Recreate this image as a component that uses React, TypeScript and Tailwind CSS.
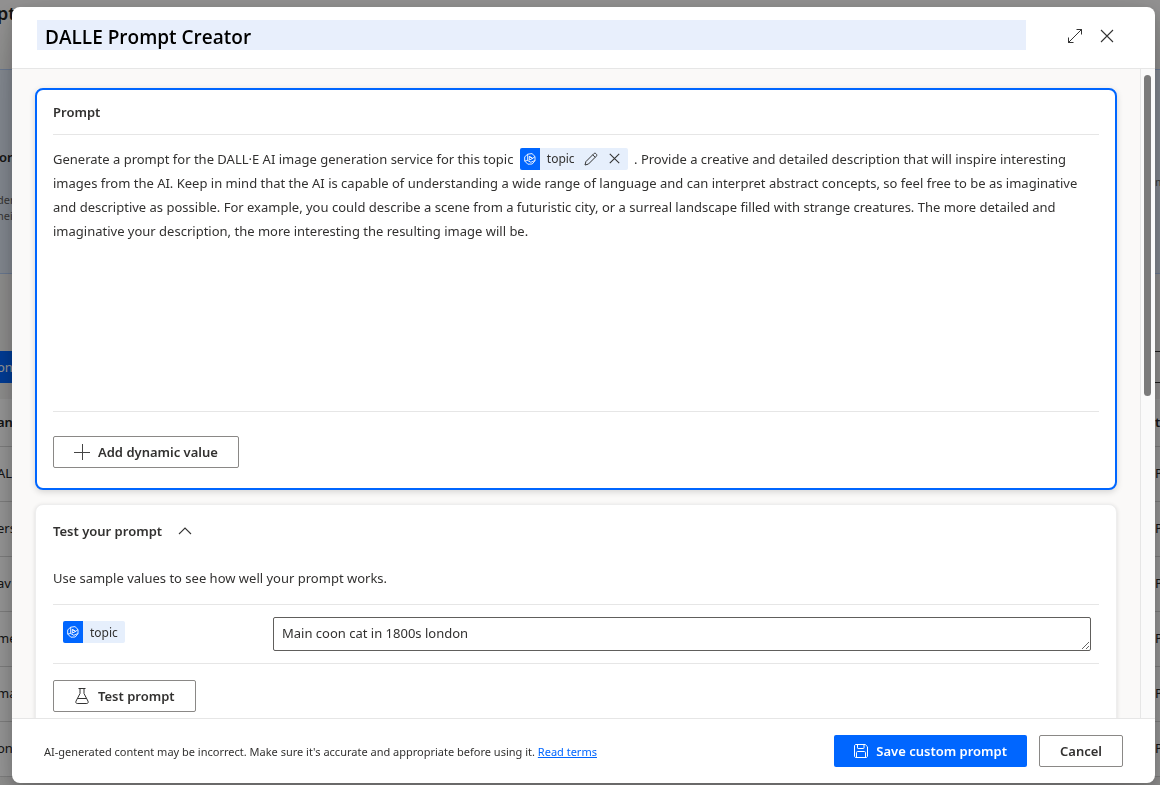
import React from 'react';

const rows = ['AL', 'ers', 'av', 'me', 'ma', 'on'];

function ExpandIcon() {
  return (
    <svg width="16" height="16" viewBox="0 0 16 16" fill="none" stroke="#333" aria-hidden="true">
      <path d="M1.2 14.8L14.8 1.2M9.5 1.5h5v5M1.5 9.5v5h5" />
    </svg>
  );
}

function CrossIcon({ size }: { size: number }) {
  return (
    <svg width={size} height={size} viewBox="0 0 14 14" fill="none" stroke="#333" strokeWidth={size > 12 ? 1.1 : 1.4} aria-hidden="true">
      <path d="M1 1l12 12M13 1L1 13" />
    </svg>
  );
}

function PencilIcon() {
  return (
    <svg width="14" height="14" viewBox="0 0 14 14" fill="none" stroke="#333" strokeLinejoin="round" aria-hidden="true">
      <path d="M1 13l.9-3.400L9.800 1.700c.6-.6 1.600-.6 2.200 0l.3.3c.6.6.6 1.600 0 2.200L4.400 12.100 1 13zM8.700 2.800l2.500 2.500" />
    </svg>
  );
}

function PlusIcon() {
  return (
    <svg width="16" height="16" viewBox="0 0 16 16" fill="none" stroke="#444" aria-hidden="true">
      <path d="M0 8.5h16M8.5 0v16" />
    </svg>
  );
}

function FlaskIcon() {
  return (
    <svg width="16" height="16" viewBox="0 0 16 16" fill="none" stroke="#333" strokeLinejoin="round" aria-hidden="true">
      <path d="M4.5.5h7M6 .5v5L2 13.200c-.5 1.100 0 2.300 1.200 2.300h9.600c1.200 0 1.700-1.200 1.200-2.300L10 5.500v-5M3.500 10.500h9" />
    </svg>
  );
}

function SaveIcon() {
  return (
    <svg width="14" height="14" viewBox="0 0 14 14" fill="none" stroke="#fff" aria-hidden="true">
      <path d="M2 .5h9.200l2.300 2.300V12c0 .9-.6 1.500-1.500 1.500H2C1.100 13.500.5 12.900.5 12V2C.5 1.100 1.100.5 2 .5zM3.500.5v3.400c0 .4.200.6.600.6h5.300c.4 0 .6-.2.6-.6V.5M2.500 13.500V8.600c0-.7.4-1.100 1.100-1.100h6.800c.7 0 1.100.4 1.100 1.100v4.900" />
    </svg>
  );
}

function ChevronIcon() {
  return (
    <svg width="14" height="8" viewBox="0 0 14 8" fill="none" stroke="#333" strokeWidth="1.1" aria-hidden="true">
      <path d="M1 7l6-6 6 6" />
    </svg>
  );
}

function ValueMark() {
  return (
    <span className="flex h-[22px] w-5 items-center justify-center rounded-l-[2px] bg-[#0066ff]">
      <svg width="12" height="12" viewBox="0 0 12 12" fill="none" stroke="#fff" strokeWidth="0.9" strokeLinejoin="round" aria-hidden="true">
        <path d="M3.500 1.200L8 .6l3 2.900v4.200L8.200 11l-4.400.2L.7 8V4zM3.700 1.200v6.300l3.200 1.800 4-1.800M5.300 3.500v3.600l3.400-1.700zM8.700 5.400L5.300 3.500M.7 8l3-.5M8.700 5.400L11 3.500" />
      </svg>
    </span>
  );
}

function Backdrop() {
  return (
    <div className="-ml-[3px] h-screen overflow-hidden bg-[#f3f2f1] text-[13px] text-[#242424]" aria-hidden="true">
      <div className="h-[69px] text-lg font-semibold leading-[26px]">pt</div>
      <div className="flex h-[205px] justify-between border-y border-[#b4cdf5] bg-[#dfe8f5] pt-[76px]">
        <div>
          <div className="pl-0.5 font-semibold leading-[22px]">or</div>
          <div className="pt-6 text-[11px] leading-4 text-[#605e5c]">der<br />hei</div>
        </div>
        <div className="w-[5px] pt-7 text-[11px] text-[#605e5c]">m</div>
      </div>
      <div className="flex h-[125px] items-end justify-between pb-4">
        <div className="h-8 w-20 bg-[#0066ff] leading-8 text-white">on</div>
        <div className="h-8 w-5 border-y border-[#333]" />
      </div>
      <div className="flex h-12 items-center justify-between border-b border-[#d6d6d6] bg-white font-semibold">
        <span>an</span>
        <span className="w-[5px]">t</span>
      </div>
      {rows.map((name) => (
        <div key={name} className="flex h-[55px] items-center justify-between border-b border-[#d6d6d6] bg-white">
          <span>{name}</span>
          <span className="w-[5px]">P</span>
        </div>
      ))}
    </div>
  );
}

export default function App() {
  return (
    <div className="h-screen overflow-hidden font-['Noto_Sans','Open_Sans',sans-serif] text-[#323130]">
      <Backdrop />
      <div className="fixed inset-0 flex bg-black/40 pt-[7px] pr-[5px] pb-[2px] pl-3">
        <div
          role="dialog"
          aria-label="DALLE Prompt Creator"
          className="flex min-w-0 flex-1 flex-col overflow-hidden rounded-lg bg-white shadow-[0_25px_58px_rgba(0,0,0,0.22),0_5px_14px_rgba(0,0,0,0.18)]"
        >
          <header className="flex h-[62px] shrink-0 items-start border-b border-[#e6e6e6] pt-[13px] pr-[41px] pl-[25px]">
            <input
              aria-label="Prompt name"
              defaultValue="DALLE Prompt Creator"
              className="h-[30px] min-w-0 flex-1 bg-[#e8effc] px-2 pt-1 font-['Open_Sans','Noto_Sans',sans-serif] text-[19px] font-semibold text-black outline-none"
            />
            <div className="ml-[41px] flex h-8 items-center gap-[17px]">
              <button aria-label="Expand"><ExpandIcon /></button>
              <button aria-label="Close"><CrossIcon size={14} /></button>
            </div>
          </header>

          <div className="flex min-h-0 flex-1">
            <main className="min-w-0 flex-1 overflow-hidden bg-[#faf9f8] pt-[19px] pr-[23px] pl-[23px]">
              <section className="rounded-lg border-2 border-[#0066ff] bg-white px-4 pb-5 shadow-[0_2px_6px_rgba(0,0,0,0.15)]">
                <h2 className="h-[45px] border-b border-[#e6e6e6] text-[13px] leading-[45px] font-semibold">Prompt</h2>
                <div className="h-[277px] border-b border-[#e6e6e6] pt-3 text-[13px] leading-6">
                  Generate a prompt for the DALL·E AI image generation service for this topic{' '}
                  <span className="-mt-[5px] mr-[3px] -mb-px ml-[3px] inline-flex h-[22px] items-center gap-[7px] rounded-[2px] bg-[#e6effc] pr-2 align-middle text-xs">
                    <ValueMark />
                    topic
                    <button aria-label="Edit topic" className="ml-0.5"><PencilIcon /></button>
                    <button aria-label="Remove topic" className="ml-1"><CrossIcon size={11} /></button>
                  </span>{' '}
                  . Provide a creative and detailed description that will inspire interesting images from the AI. Keep in mind that the AI is capable of understanding a wide range of language and can interpret abstract concepts, so feel free to be as imaginative and descriptive as possible. For example, you could describe a scene from a futuristic city, or a surreal landscape filled with strange creatures. The more detailed and imaginative your description, the more interesting the resulting image will be.
                </div>
                <button className="mt-6 flex h-8 items-center gap-2 rounded-[2px] border border-[#8a8886] px-5 text-[13px] font-semibold">
                  <PlusIcon />
                  <span className="pt-0.5">Add dynamic value</span>
                </button>
              </section>

              <section className="mt-3.5 rounded-lg border border-[#eeeeee] bg-white px-[17px] pb-10 shadow-[0_1px_4px_rgba(0,0,0,0.12)]">
                <button className="flex h-[52px] items-center gap-4 text-[13px] font-semibold">
                  <span className="pt-0.5">Test your prompt</span>
                  <ChevronIcon />
                </button>
                <p className="h-12 border-b border-[#e6e6e6] pt-[11px] text-[13px] leading-5">
                  Use sample values to see how well your prompt works.
                </p>
                <div className="flex h-[59px] items-start border-b border-[#e6e6e6] pt-3 pr-2 pl-2.5">
                  <label htmlFor="topic" className="flex w-[210px] shrink-0 pt-1 text-xs">
                    <span className="inline-flex h-[22px] items-center gap-[7px] rounded-[2px] bg-[#e6effc] pr-[7px]">
                      <ValueMark />
                      <span className="pt-0.5">topic</span>
                    </span>
                  </label>
                  <textarea
                    id="topic"
                    defaultValue="Main coon cat in 1800s london"
                    className="h-[34px] min-w-0 flex-1 resize-y overflow-hidden rounded-[2px] border border-[#605e5c] px-2 py-[5px] text-[13px] leading-5 outline-none"
                  />
                </div>
                <button className="mt-4 flex h-8 items-center gap-2 rounded-[2px] border border-[#8a8886] px-5 text-[13px] font-semibold">
                  <FlaskIcon />
                  <span className="pt-0.5">Test prompt</span>
                </button>
              </section>
            </main>
            <div className="flex w-[15px] shrink-0 justify-start border-l border-[#e6e6e6] bg-[#fafafa] pt-1.5 pl-[3px]">
              <div className="h-[321px] w-[7px] rounded-full bg-[#7b7b7b]" />
            </div>
          </div>

          <footer className="flex h-[65px] shrink-0 items-center justify-between border-t border-[#e6e6e6] pr-8 pl-8">
            <p className="pt-0.5 text-[11px]">
              AI-generated content may be incorrect. Make sure it's accurate and appropriate before using it.{' '}
              <a href="#terms" className="text-[#0066ff] underline">Read terms</a>
            </p>
            <div className="flex gap-3">
              <button className="flex h-8 items-center gap-2 rounded-[2px] bg-[#0066ff] px-5 text-[13px] font-semibold text-white">
                <SaveIcon />
                <span className="pt-0.5">Save custom prompt</span>
              </button>
              <button className="h-8 rounded-[2px] border border-[#8a8886] px-5 pt-0.5 text-[13px] font-semibold">Cancel</button>
            </div>
          </footer>
        </div>
      </div>
    </div>
  );
}
